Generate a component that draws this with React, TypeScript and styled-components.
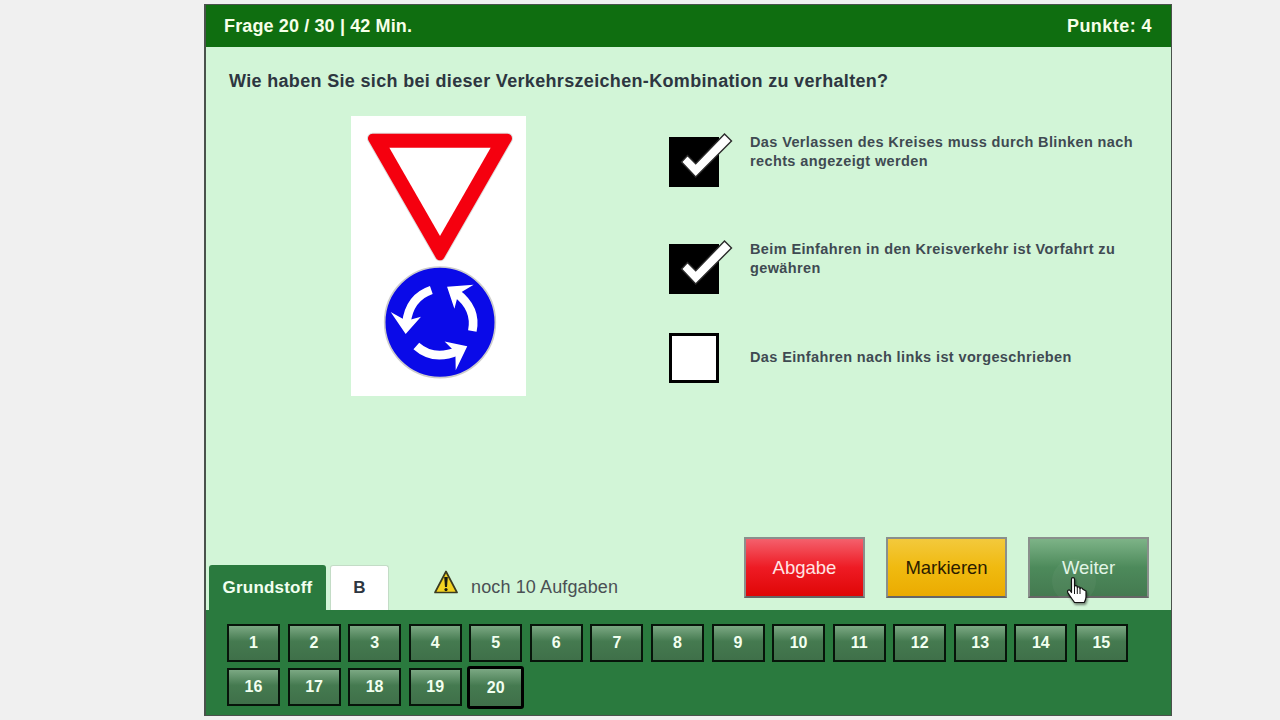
import styled, { createGlobalStyle } from "styled-components";

const GlobalStyle = createGlobalStyle`
  html, body {
    margin: 0;
    padding: 0;
    background: #f0f0f0;
  }
  body {
    font-family: "Liberation Sans", Arial, sans-serif;
  }
`;

const answers = [
  {
    id: 1,
    text: "Das Verlassen des Kreises muss durch Blinken nach rechts angezeigt werden",
    checked: true,
    height: 107,
  },
  {
    id: 2,
    text: "Beim Einfahren in den Kreisverkehr ist Vorfahrt zu gewähren",
    checked: true,
    height: 89,
  },
  { id: 3, text: "Das Einfahren nach links ist vorgeschrieben", checked: false, height: 50 },
];

const questionNumbers = Array.from({ length: 20 }, (_, i) => i + 1);

const RoundaboutArrow = ({ angle }: { angle: number }) => (
  <g transform={`rotate(${angle} 300 637)`}>
    <path d="M274 540 Q208 562 199 640" fill="none" stroke="#fff" strokeWidth="26" strokeLinecap="butt" />
    <polygon points="152,606 197,672 243,620 199,632" fill="#fff" />
  </g>
);

const TrafficSign = () => (
  <SignPicture viewBox="33 18 525 840">
    <polygon points="98,85 502,85 300,437" fill="#ddd" stroke="#ddd" strokeWidth="34" strokeLinejoin="round" />
    <polygon points="98,85 502,85 300,437" fill="#f5000f" stroke="#f5000f" strokeWidth="28" strokeLinejoin="round" />
    <polygon points="148,113 452,113 300,378" fill="#fff" />
    <circle cx="300" cy="637" r="166" fill="#0a0ae8" stroke="#ccc" strokeWidth="5" />
    <RoundaboutArrow angle={0} />
    <RoundaboutArrow angle={120} />
    <RoundaboutArrow angle={240} />
  </SignPicture>
);

const CheckMark = () => (
  <CheckOverlay viewBox="0 0 64 44" width="64" height="44">
    <polygon
      points="12.5,25 18.5,18.5 26.7,26.8 55.5,-3 62.5,4 26.7,40"
      fill="#fff"
      stroke="#2a2a2a"
      strokeWidth="1.4"
    />
  </CheckOverlay>
);

const WarningIcon = () => (
  <WarningGlyph viewBox="0 0 24 24" width="24" height="24">
    <path d="M12 1.5 L23 22.5 H1 Z" fill="#f3d222" stroke="#3a3a20" strokeWidth="1.7" strokeLinejoin="round" />
    <path d="M10.2 7 h3.6 l-.8 10 h-2 Z" fill="#1a1a10" />
    <circle cx="12" cy="19.6" r="1.6" fill="#1a1a10" />
  </WarningGlyph>
);

const HandCursor = () => (
  <CursorIcon viewBox="0 0 20 26" width="20" height="26">
    <path
      d="M4.5 2 C4.5 .2 7.5 .2 7.5 2 V9.5 C7.5 8.4 10.3 8.4 10.3 9.7 V10.5 C10.3 9.6 13 9.6 13 10.8 V11.6 C13 10.6 15.8 10.8 15.8 12.2 L19 14 V20 C19 22.5 18 24 17.2 25.5 H7.5 C6 23 3.5 20.5 .8 15.6 C-.2 13.6 2 12.2 3.2 13.6 L4.5 15.5 Z"
      fill="#fff"
      stroke="#111"
      strokeWidth="1.2"
      strokeLinejoin="round"
    />
    <path d="M7.5 10 V17 M10.3 10.5 V17 M13 11 V17" stroke="#111" strokeWidth="1" fill="none" />
  </CursorIcon>
);

const App = () => {
  return (
    <>
      <GlobalStyle />
      <Frame>
        <Header>
          <span>Frage 20 / 30 | 42 Min.</span>
          <Score>Punkte: 4</Score>
        </Header>
        <Main>
          <Question>Wie haben Sie sich bei dieser Verkehrszeichen-Kombination zu verhalten?</Question>
          <Content>
            <SignCard>
              <TrafficSign />
            </SignCard>
            <AnswerList>
              {answers.map((a) => (
                <AnswerRow key={a.id} $height={a.height} $centered={!a.checked}>
                  <CheckBox $checked={a.checked}>{a.checked && <CheckMark />}</CheckBox>
                  <AnswerText $centered={!a.checked}>{a.text}</AnswerText>
                </AnswerRow>
              ))}
            </AnswerList>
          </Content>
          <BottomRow>
            <Tabs>
              <Tab $active>Grundstoff</Tab>
              <Tab>B</Tab>
            </Tabs>
            <Notice>
              <WarningIcon />
              <span>noch 10 Aufgaben</span>
            </Notice>
            <Actions>
              <ActionButton $top="#f4606c" $mid="#ee1b24" $bottom="#e00606" $color="#ffe4e4">
                Abgabe
              </ActionButton>
              <ActionButton $top="#f3c93c" $mid="#f0ba10" $bottom="#ebab00" $color="#2c1c00">
                Markieren
              </ActionButton>
              <ActionButton $top="#7db387" $mid="#4d8a5b" $bottom="#447a50" $color="#e2f5e6">
                Weiter
                <ClickGlow />
                <HandCursor />
              </ActionButton>
            </Actions>
          </BottomRow>
        </Main>
        <Footer>
          <NumberGrid>
            {questionNumbers.map((n) => (
              <NumberButton key={n} $current={n === 20}>
                {n}
              </NumberButton>
            ))}
          </NumberGrid>
        </Footer>
      </Frame>
    </>
  );
};

const Frame = styled.div`
  box-sizing: border-box;
  width: 968px;
  height: 712px;
  margin: 4px 0 0 204px;
  border: 1px solid #4a524c;
  border-width: 1px 1px 1px 2px;
  background: #d2f5d7;
  display: flex;
  flex-direction: column;
`;

const Header = styled.div`
  height: 42px;
  flex-shrink: 0;
  padding: 0 19px 0 18px;
  background: #0f6e10;
  display: flex;
  align-items: center;
  justify-content: space-between;
  color: #f7ffe9;
  font-size: 18px;
  font-weight: 700;
  letter-spacing: 0.13px;
`;

const Score = styled.span`
  letter-spacing: 0.45px;
`;

const Main = styled.div`
  flex: 1;
  display: flex;
  flex-direction: column;
  min-height: 0;
`;

const Question = styled.div`
  padding: 24px 0 0 23px;
  height: 21px;
  line-height: 21px;
  font-size: 18px;
  font-weight: 700;
  letter-spacing: 0.33px;
  color: #2d3640;
`;

const Content = styled.div`
  flex: 1;
  display: flex;
  padding: 24px 0 0 145px;
`;

const SignCard = styled.div`
  width: 175px;
  height: 280px;
  background: #fff;
`;

const SignPicture = styled.svg`
  display: block;
  width: 175px;
  height: 280px;
`;

const AnswerList = styled.div`
  margin: 21px 0 0 143px;
  display: flex;
  flex-direction: column;
`;

const AnswerRow = styled.div<{ $height: number; $centered: boolean }>`
  height: ${(p) => p.$height}px;
  display: flex;
  align-items: ${(p) => (p.$centered ? "center" : "flex-start")};
`;

const CheckBox = styled.div<{ $checked: boolean }>`
  position: relative;
  box-sizing: border-box;
  flex-shrink: 0;
  width: 50px;
  height: 50px;
  background: ${(p) => (p.$checked ? "#000" : "#fff")};
  border: 3px solid #000;
`;

const CheckOverlay = styled.svg`
  position: absolute;
  top: -3px;
  left: -3px;
  overflow: visible;
`;

const AnswerText = styled.div<{ $centered: boolean }>`
  width: 392px;
  margin: ${(p) => (p.$centered ? "-2px" : "-4px")} 0 0 31px;
  font-size: 14.5px;
  line-height: 19px;
  font-weight: 700;
  letter-spacing: 0.38px;
  color: #3f4a52;
`;

const BottomRow = styled.div`
  height: 73px;
  flex-shrink: 0;
  display: flex;
  align-items: flex-end;
  padding-left: 3px;
`;

const Tabs = styled.div`
  display: flex;
  gap: 4px;
`;

const Tab = styled.div<{ $active?: boolean }>`
  box-sizing: border-box;
  width: ${(p) => (p.$active ? "117px" : "59px")};
  height: 45px;
  display: flex;
  align-items: center;
  justify-content: center;
  border-radius: 3px 3px 0 0;
  font-size: 17px;
  letter-spacing: 0.2px;
  font-weight: 700;
  background: ${(p) => (p.$active ? "#2a7a3e" : "#fff")};
  color: ${(p) => (p.$active ? "#f2fff0" : "#2d3640")};
  border: ${(p) => (p.$active ? "none" : "1px solid #c3dcc6")};
  border-bottom: none;
`;

const Notice = styled.div`
  height: 45px;
  margin-left: 45px;
  display: flex;
  align-items: center;
  gap: 13px;
  font-size: 18px;
  letter-spacing: 0.12px;
  color: #4a5054;
`;

const WarningGlyph = styled.svg`
  margin-bottom: 12px;
`;

const Actions = styled.div`
  margin-left: auto;
  margin-right: 22px;
  margin-bottom: 12px;
  display: flex;
  gap: 21px;
`;

const ActionButton = styled.div<{ $top: string; $mid: string; $bottom: string; $color: string }>`
  position: relative;
  box-sizing: border-box;
  width: 121px;
  height: 61px;
  display: flex;
  align-items: center;
  justify-content: center;
  border: 2px solid #8a8f8c;
  border-bottom-color: #666;
  background: linear-gradient(${(p) => p.$top}, ${(p) => p.$mid} 50%, ${(p) => p.$bottom});
  color: ${(p) => p.$color};
  font-size: 18.5px;
`;

const ClickGlow = styled.div`
  position: absolute;
  top: 20px;
  left: 22px;
  width: 44px;
  height: 44px;
  border-radius: 50%;
  background: rgba(255, 255, 255, 0.04);
`;

const CursorIcon = styled.svg`
  position: absolute;
  top: 38px;
  left: 37px;
  filter: drop-shadow(1px 2px 1px rgba(0, 0, 0, 0.45));
`;

const Footer = styled.div`
  height: 105px;
  flex-shrink: 0;
  box-sizing: border-box;
  padding: 14px 0 0 21px;
  background: #2a7a3e;
`;

const NumberGrid = styled.div`
  display: grid;
  grid-template-columns: repeat(15, 53px);
  grid-auto-rows: 38px;
  column-gap: 7.57px;
  row-gap: 6px;
`;

const NumberButton = styled.div<{ $current: boolean }>`
  box-sizing: border-box;
  height: 38px;
  display: flex;
  align-items: center;
  justify-content: center;
  border: 2px solid #07140a;
  background: linear-gradient(#7ba883, #457a50 45%, #3f7049);
  color: #f2fff0;
  font-size: 16px;
  font-weight: 700;
  ${(p) =>
    p.$current &&
    `
    width: 57px;
    height: 43px;
    margin: -2px 0 0 -2px;
    border: 3px solid #000;
    border-radius: 3px;
  `}
`;

export default App;
